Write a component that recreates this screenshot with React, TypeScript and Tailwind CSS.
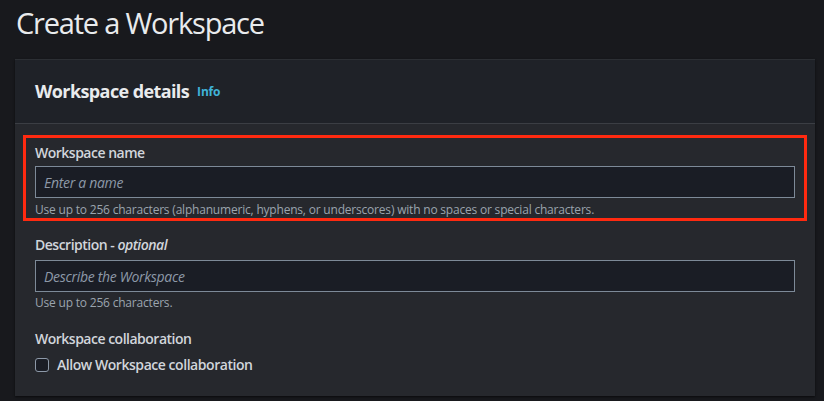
import React from "react";

export default function App() {
  const font = { fontFamily: '"Open Sans", "Noto Sans", sans-serif' };
  return (
    <div className="w-[824px] h-[401px] bg-[#18191d] overflow-hidden" style={font}>
      <h1 className="pl-4 pt-[3px] text-[29px] leading-[40px] text-[#e9ebed] font-normal tracking-[-1.2px]">
        Create a Workspace
      </h1>
      <div className="mt-4 ml-[15px] w-[800px] h-[337px] bg-[#26282d] shadow-[0_1px_2px_rgba(0,0,0,0.6)] border-t border-[#2c2f34]">
        <div className="h-[64px] bg-[#1f2228] border-b border-[#3b3e44] flex items-center px-5 gap-2">
          <span className="text-[18px] font-bold text-[#e9ebed] leading-none tracking-[-0.6px] -mt-[2px]">Workspace details</span>
          <span className="text-[12px] font-bold text-[#3fb3d8] leading-none tracking-[-0.2px]">Info</span>
        </div>
        <div className="px-2 pt-[11px]">
          <div className="border-[3px] border-[#ff2a10] px-[9px] pt-[5px] pb-0">
            <div className="text-[14px] font-semibold text-[#d1d5db] leading-[20px] tracking-[-0.5px]">Workspace name</div>
            <div className="mt-[3px] h-[32px] bg-[#1a1d25] border border-[#7d8a98] flex items-center px-2">
              <span className="italic text-[14px] text-[#8d99a8] tracking-[-0.3px]">Enter a name</span>
            </div>
            <div className="mt-[4px] text-[12px] text-[#9ba4ad] leading-[16px] tracking-[-0.2px]">
              Use up to 256 characters (alphanumeric, hyphens, or underscores) with no spaces or special characters.
            </div>
          </div>
        </div>
        <div className="px-5 pt-[14px]">
          <div className="text-[14px] font-semibold text-[#d1d5db] leading-[20px] tracking-[-0.5px]">
            Description - <span className="italic">optional</span>
          </div>
          <div className="mt-[5px] h-[32px] bg-[#1a1d25] border border-[#7d8a98] flex items-center px-2">
            <span className="italic text-[14px] text-[#8d99a8] tracking-[-0.3px]">Describe the Workspace</span>
          </div>
          <div className="mt-[3px] text-[12px] text-[#9ba4ad] leading-[16px] tracking-[-0.2px]">Use up to 256 characters.</div>
          <div className="mt-[18px] text-[14px] font-semibold text-[#d1d5db] leading-[20px] tracking-[-0.5px]">Workspace collaboration</div>
          <div className="mt-[5px] flex items-center gap-[8px] h-[21px]">
            <div className="w-[14px] h-[14px] border border-[#8d99a8] rounded-[3px] bg-[#1a1d25]" />
            <span className="text-[14px] font-semibold text-[#d1d5db] tracking-[-0.45px]">Allow Workspace collaboration</span>
          </div>
        </div>
      </div>
    </div>
  );
}
